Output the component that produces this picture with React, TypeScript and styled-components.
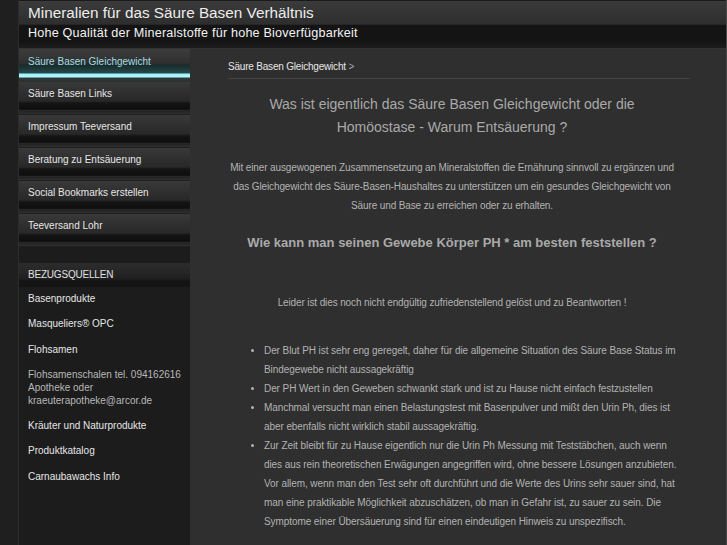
import React from "react";
import styled, { createGlobalStyle } from "styled-components";

const Global = createGlobalStyle`
  html, body { margin: 0; padding: 0; background: #1f1f1f; }
  body { font-family: "Liberation Sans", Arial, sans-serif; overflow: hidden; }
  * { box-sizing: border-box; }
`;

const Page = styled.div`
  margin-left: 18px;
  width: 709px;
  height: 545px;
  border-left: 1px solid #2c2c2c;
  border-right: 1px solid #474747;
  display: flex;
  flex-direction: column;
  background: #2f2f2f;
`;

const TitleBar = styled.div`
  height: 25px;
  border-top: 1px solid #1a1a1a;
  background: linear-gradient(#3b3b3b, #333 60%, #2e2e2e);
  padding-left: 9px;
  color: #ececec;
  font-size: 15.3px;
  line-height: 24px;
  border-bottom: 1px solid #262626;
`;

const SubBar = styled.div`
  height: 24px;
  background: linear-gradient(#141414 0, #141414 70%, #1c1c1c 100%);
  border-bottom: 1px solid #333;
  padding-left: 9px;
  color: #f2f2f2;
  font-size: 12.6px;
  line-height: 17px;
  letter-spacing: 0.2px;
`;

const Body = styled.div`
  flex: 1;
  display: flex;
  min-height: 0;
`;

const Sidebar = styled.div`
  width: 171px;
  background: #1c1c1c;
  display: flex;
  flex-direction: column;
`;

const NavItem = styled.a<{ $active?: boolean }>`
  display: block;
  height: 33px;
  padding: ${(p) => (p.$active ? "7px" : "6px")} 0 0 9px;
  font-size: 10px;
  text-decoration: none;
  color: ${(p) => (p.$active ? "#9fdde2" : "#e6e6e6")};
  background: ${(p) =>
    p.$active
      ? "linear-gradient(#3c3c3c 0, #303030 14px, #1a2a2b 16px, #23494b 24px, #9ff2ff 25px, #b8f6ff 28px, #2b3b3c 29px, #2e2e2e 33px)"
      : "linear-gradient(#393939 0, #2e2e2e 12px, #282828 19px, #141414 21px, #0e0e0e 27px, #1a1a1a 28px, #333 29px, #161616 30px, #3a3a3a 31px, #222 32px, #1c1c1c 33px)"};
`;

const Spacer = styled.div`
  height: 16px;
`;

const SectionHead = styled.div`
  height: 24px;
  padding: 6px 0 0 9px;
  font-size: 10px;
  color: #e0e0e0;
  background: linear-gradient(#2c2c2c 0, #252525 10px, #1e1e1e 16px, #131313 18px, #141414 24px);
  letter-spacing: -0.2px;
`;

const LinkList = styled.div`
  display: flex;
  flex-direction: column;
  padding: 5px 0 0 9px;
  gap: 12.3px;
`;

const SideLink = styled.a<{ $plain?: boolean }>`
  display: block;
  font-size: 10px;
  line-height: 13px;
  color: ${(p) => (p.$plain ? "#b8b8b8" : "#e6e6e6")};
  text-decoration: none;
`;

const Main = styled.div`
  flex: 1;
  padding: 12px 36px 0 38px;
  color: #b2b2b2;
`;

const Crumb = styled.div`
  font-size: 10px;
  color: #e6e6e6;
  padding-bottom: 6px;
  border-bottom: 1px solid #444;
  letter-spacing: -0.2px;

  span {
    color: #aaa;
  }
`;

const Text = styled.div`
  padding-right: 14px;
  text-align: center;
`;

const H1 = styled.h1`
  margin: 14px 0 0;
  font-size: 14px;
  font-weight: normal;
  line-height: 23px;
  color: #a9a9a9;
`;

const P = styled.p<{ $top: number }>`
  margin: ${(p) => p.$top}px 0 0;
  font-size: 10px;
  line-height: 19px;
  letter-spacing: -0.12px;
`;

const H2 = styled.h2`
  margin: 20px 0 0;
  font-size: 13px;
  font-weight: bold;
  color: #a9a9a9;
`;

const List = styled.ul`
  margin: 29px -8px 0 0;
  padding: 0 0 0 36px;
  font-size: 10px;
  line-height: 19px;
  letter-spacing: -0.08px;
  text-align: left;
  list-style: disc;
`;

export default function App() {
  return (
    <>
      <Global />
      <Page>
        <TitleBar>Mineralien für das Säure Basen Verhältnis</TitleBar>
        <SubBar>Hohe Qualität der Mineralstoffe für hohe Bioverfügbarkeit</SubBar>
        <Body>
          <Sidebar>
            <NavItem $active>Säure Basen Gleichgewicht</NavItem>
            <NavItem>Säure Basen Links</NavItem>
            <NavItem>Impressum Teeversand</NavItem>
            <NavItem>Beratung zu Entsäuerung</NavItem>
            <NavItem>Social Bookmarks erstellen</NavItem>
            <NavItem>Teeversand Lohr</NavItem>
            <Spacer />
            <SectionHead>BEZUGSQUELLEN</SectionHead>
            <LinkList>
              <SideLink>Basenprodukte</SideLink>
              <SideLink>Masqueliers® OPC</SideLink>
              <SideLink>Flohsamen</SideLink>
              <SideLink $plain>
                Flohsamenschalen tel. 094162616
                <br />
                Apotheke oder
                <br />
                kraeuterapotheke@arcor.de
              </SideLink>
              <SideLink>Kräuter und Naturprodukte</SideLink>
              <SideLink>Produktkatalog</SideLink>
              <SideLink>Carnaubawachs Info</SideLink>
            </LinkList>
          </Sidebar>
          <Main>
            <Crumb>
              Säure Basen Gleichgewicht <span>&gt;</span>
            </Crumb>
            <Text>
              <H1>
                Was ist eigentlich das Säure Basen Gleichgewicht oder die
                <br />
                Homöostase - Warum Entsäuerung ?
              </H1>
              <P $top={19}>
                Mit einer ausgewogenen Zusammensetzung an Mineralstoffen die Ernährung sinnvoll zu ergänzen und
                <br />
                das Gleichgewicht des Säure-Basen-Haushaltes zu unterstützen um ein gesundes Gleichgewicht von
                <br />
                Säure und Base zu erreichen oder zu erhalten.
              </P>
              <H2>Wie kann man seinen Gewebe Körper PH * am besten feststellen ?</H2>
              <P $top={43}>
                Leider ist dies noch nicht endgültig zufriedenstellend gelöst und zu Beantworten !
              </P>
              <List>
                <li>
                  Der Blut PH ist sehr eng geregelt, daher für die allgemeine Situation des Säure Base Status im
                  Bindegewebe nicht aussagekräftig
                </li>
                <li>Der PH Wert in den Geweben schwankt stark und ist zu Hause nicht einfach festzustellen</li>
                <li>
                  Manchmal versucht man einen Belastungstest mit Basenpulver und mißt den Urin Ph, dies ist
                  aber ebenfalls nicht wirklich stabil aussagekräftig.
                </li>
                <li>
                  Zur Zeit bleibt für zu Hause eigentlich nur die Urin Ph Messung mit Teststäbchen, auch wenn
                  dies aus rein theoretischen Erwägungen angegriffen wird, ohne bessere Lösungen anzubieten.
                  Vor allem, wenn man den Test sehr oft durchführt und die Werte des Urins sehr sauer sind, hat
                  man eine praktikable Möglichkeit abzuschätzen, ob man in Gefahr ist, zu sauer zu sein. Die
                  Symptome einer Übersäuerung sind für einen eindeutigen Hinweis zu unspezifisch.
                </li>
              </List>
            </Text>
          </Main>
        </Body>
      </Page>
    </>
  );
}
